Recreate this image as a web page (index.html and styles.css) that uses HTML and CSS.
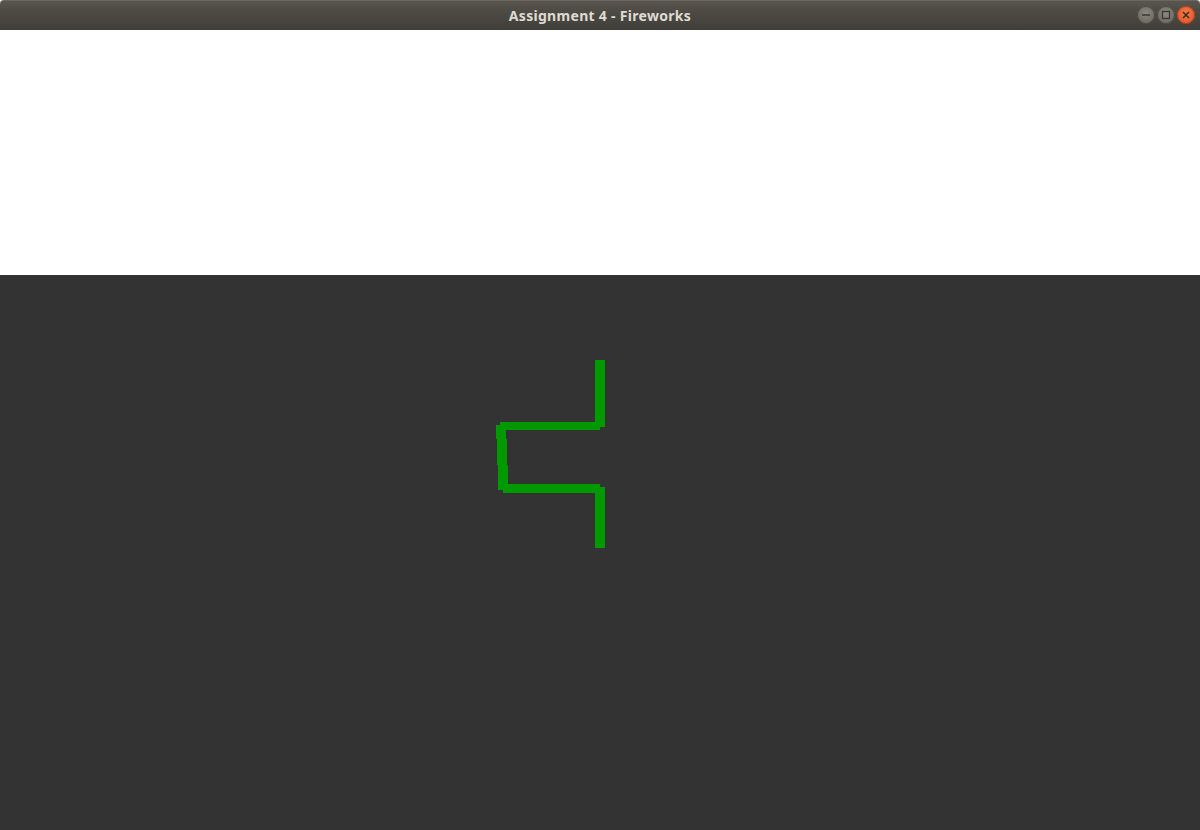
FILE: index.html
```html
<!DOCTYPE html>
<html>
<head>
<meta charset="utf-8">
<title>Assignment 4 - Fireworks</title>
<link rel="stylesheet" href="styles.css">
</head>
<body>
<div class="window">
  <div class="titlebar">
    <span class="title">Assignment 4 - Fireworks</span>
    <div class="controls">
      <span class="btn btn-min"><svg width="18" height="18" viewBox="0 0 18 18"><line x1="5" y1="9" x2="13" y2="9" stroke="#3a3935" stroke-width="1.5"/></svg></span>
      <span class="btn btn-max"><svg width="18" height="18" viewBox="0 0 18 18"><rect x="5.5" y="5.5" width="7" height="7" fill="none" stroke="#3a3935" stroke-width="1.3"/></svg></span>
      <span class="btn btn-close"><svg width="18" height="18" viewBox="0 0 18 18"><path d="M6 6 L12 12 M12 6 L6 12" stroke="#3a2a22" stroke-width="1.5"/></svg></span>
    </div>
  </div>
  <div class="top-area"></div>
  <div class="canvas">
    <svg class="drawing" width="1200" height="555" viewBox="0 0 1200 555">
      <g stroke="#009900" fill="none" stroke-linecap="butt" shape-rendering="crispEdges">
        <line x1="600" y1="85" x2="600" y2="152" stroke-width="10"/>
        <line x1="500" y1="151" x2="600" y2="151" stroke-width="8"/>
        <line x1="501" y1="150" x2="503.5" y2="215" stroke-width="10"/>
        <line x1="503" y1="213.5" x2="600" y2="213.5" stroke-width="9"/>
        <line x1="600" y1="212" x2="600" y2="273" stroke-width="10"/>
      </g>
    </svg>
  </div>
</div>
</body>
</html>
```

FILE: styles.css
```css
html, body {
  margin: 0;
  padding: 0;
  background: #ffffff;
}

.window {
  width: 1200px;
  height: 830px;
  display: flex;
  flex-direction: column;
  overflow: hidden;
}

.titlebar {
  position: relative;
  height: 30px;
  flex: 0 0 30px;
  background: linear-gradient(#5a564f 0%, #4f4c46 30%, #403e39 100%);
  border-top: 1px solid #6b675f;
  box-sizing: border-box;
  border-radius: 4px 4px 0 0;
  display: flex;
  align-items: center;
  justify-content: center;
}

.title {
  font-family: "Noto Sans", "Open Sans", "DejaVu Sans", sans-serif;
  font-weight: 700;
  font-size: 14px;
  color: #dfdbd2;
  letter-spacing: 0.3px;
}

.controls {
  position: absolute;
  right: 5px;
  top: 5px;
  display: flex;
  gap: 2px;
}

.btn {
  width: 18px;
  height: 18px;
  border-radius: 50%;
  display: block;
}

.btn svg {
  display: block;
}

.btn-min, .btn-max {
  background: radial-gradient(circle at 50% 40%, #8a877f 0%, #6f6c65 70%, #5c5a54 100%);
  box-shadow: inset 0 0 0 1px #4a4843;
}

.btn-close {
  background: radial-gradient(circle at 50% 40%, #f37a4c 0%, #e55a27 70%, #c9481b 100%);
  box-shadow: inset 0 0 0 1px #a9411c;
}

.top-area {
  height: 245px;
  flex: 0 0 245px;
  background: #ffffff;
}

.canvas {
  flex: 1;
  background: #333333;
}

.drawing {
  display: block;
}
```
